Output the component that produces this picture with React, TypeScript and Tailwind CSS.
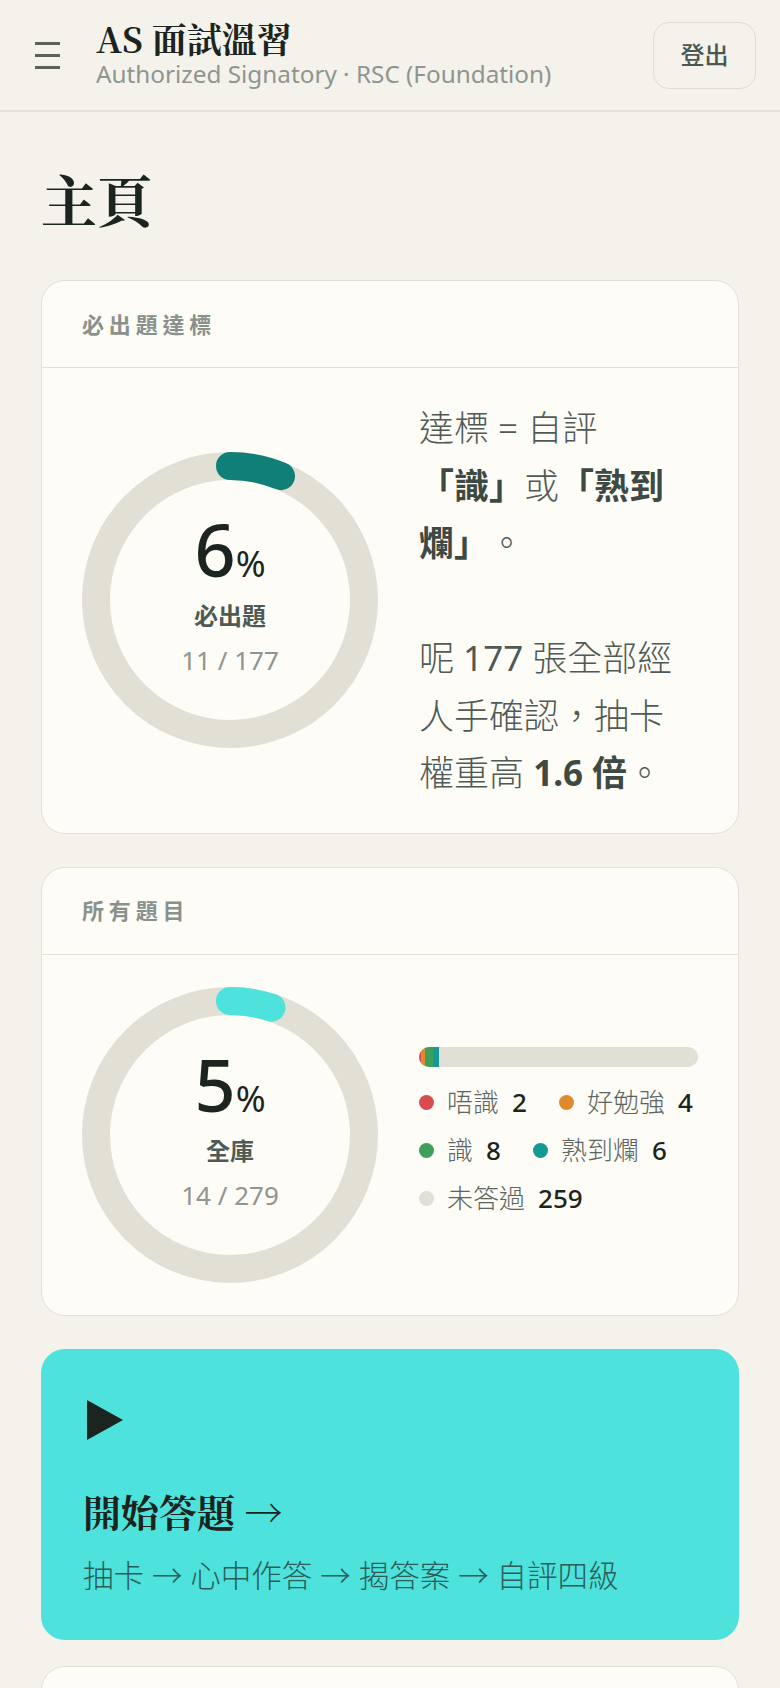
import React from "react";

const sans = "'Noto Sans', 'Noto Sans CJK TC', sans-serif";
const serif = "'Noto Serif CJK TC', 'Noto Serif CJK SC', 'Noto Serif', serif";
const cjk = "'Noto Sans CJK TC', sans-serif";

function Donut({
  frac,
  color,
  big,
  label,
  sub,
}: {
  frac: number;
  color: string;
  big: string;
  label: string;
  sub: string;
}) {
  const r = 134;
  const c = 2 * Math.PI * r;
  return (
    <div className="relative w-[296px] h-[296px] shrink-0">
      <svg width="296" height="296" viewBox="0 0 296 296">
        <circle cx="148" cy="148" r={r} fill="none" stroke="#e2dfd5" strokeWidth="28" />
        <circle
          cx="148"
          cy="148"
          r={r}
          fill="none"
          stroke={color}
          strokeWidth="28"
          strokeLinecap="round"
          strokeDasharray={`${c * frac} ${c}`}
          transform="rotate(-90 148 148)"
        />
      </svg>
      <div className="absolute inset-0 flex flex-col items-center justify-center pb-[10px]">
        <div className="flex items-baseline leading-none text-[#1c2420]">
          <span className="text-[72px] font-medium leading-[72px]">{big}</span>
          <span className="text-[36px]">%</span>
        </div>
        <div className="mt-[15px] text-[24px] leading-[32px] font-bold text-[#4f5a55]">{label}</div>
        <div className="mt-[11px] text-[26px] leading-[34px] text-[#8f958f]">{sub}</div>
      </div>
    </div>
  );
}

function Legend({ color, label, n }: { color: string; label: string; n: number }) {
  return (
    <div className="flex items-center h-[48px]">
      <span className="w-[15px] h-[15px] rounded-full mr-[13px]" style={{ backgroundColor: color }} />
      <span className="text-[26px] font-light text-[#5c6460]">{label}</span>
      <span className="ml-[13px] text-[26px] font-medium text-[#1c2420]">{n}</span>
    </div>
  );
}

function Card({ title, children, className = "" }: { title: string; children: React.ReactNode; className?: string }) {
  return (
    <section className={`rounded-[24px] border-[1.5px] border-[#e3e0d5] bg-[#fdfcf7] ${className}`}>
      <div className="h-[87px] px-10 flex items-center border-b-[1.5px] border-[#e3e0d5]">
        <h2 className="text-[22px] tracking-[0.22em] font-semibold text-[#8a918b]">{title}</h2>
      </div>
      {children}
    </section>
  );
}

export default function App() {
  return (
    <div className="min-h-screen bg-[#f4f2eb] text-[#1c2420] [text-spacing-trim:space-all]" style={{ fontFamily: sans }}>
      <header className="flex items-center h-[112px] border-b-2 border-[#e4e1d6] pl-[35px] pr-[24px]">
        <svg width="25" height="27" viewBox="0 0 25 27" className="shrink-0">
          <path d="M0 1.5H25M0 13.5H25M0 25.5H25" stroke="#5a625e" strokeWidth="3" />
        </svg>
        <div className="ml-[36px] flex flex-col">
          <div className="text-[35px] leading-[38px] font-bold text-[#1c2420]" style={{ fontFamily: serif }}>
            AS 面試溫習
          </div>
          <div className="text-[24.3px] leading-[34px] text-[#8f958f]">Authorized Signatory · RSC (Foundation)</div>
        </div>
        <button className="ml-auto w-[103px] h-[67px] rounded-2xl border-[1.5px] border-[#e0ddd0] text-[24px] font-medium text-[#4d5752]">
          登出
        </button>
      </header>

      <main className="px-[41px]">
        <h1 className="mt-[52px] mb-[48px] text-[56px] leading-[68px] font-bold text-[#1c2420]" style={{ fontFamily: serif }}>
          主頁
        </h1>

        <Card title="必出題達標">
          <div className="flex items-center px-10 py-[31px] gap-[41px]">
            <Donut frac={11 / 177} color="#0f7f77" big="6" label="必出題" sub="11 / 177" />
            <div className="w-[276px] text-[35px] leading-[57.5px] font-light text-[#505a55]">
              <p>
                達標 = 自評<b className="font-bold text-[#3f4944]">「識」</b>或<b className="font-bold text-[#3f4944]">「熟到爛」</b>。
              </p>
              <p className="mt-[57.5px]">
                呢 <span className="font-normal">177</span> 張全部經人手確認，抽卡權重高{" "}
                <b className="font-bold text-[#3f4944]">1.6 倍</b>。
              </p>
            </div>
          </div>
        </Card>

        <Card title="所有題目" className="mt-[33px]">
          <div className="flex items-center px-10 py-8 gap-[41px]">
            <Donut frac={14 / 279} color="#4de3dc" big="5" label="全庫" sub="14 / 279" />
            <div className="w-[280px]">
              <div className="flex h-[20px] w-full rounded-full overflow-hidden bg-[#e2dfd5]">
                <div className="h-full bg-[#d94a4f]" style={{ width: `${(2 / 279) * 100}%` }} />
                <div className="h-full bg-[#e08a2e]" style={{ width: `${(4 / 279) * 100}%` }} />
                <div className="h-full bg-[#3f9e5a]" style={{ width: `${(8 / 279) * 100}%` }} />
                <div className="h-full bg-[#149a94]" style={{ width: `${(6 / 279) * 100}%` }} />
              </div>
              <div className="mt-[12px] flex flex-wrap gap-x-8">
                <Legend color="#d94a4f" label="唔識" n={2} />
                <Legend color="#e08a2e" label="好勉強" n={4} />
                <Legend color="#3f9e5a" label="識" n={8} />
                <Legend color="#149a94" label="熟到爛" n={6} />
                <Legend color="#e2dfd5" label="未答過" n={259} />
              </div>
            </div>
          </div>
        </Card>

        <a className="mt-[33px] block h-[291px] rounded-[24px] bg-[#4de3dc] px-[42px] pt-[51px]">
          <svg width="36" height="40" viewBox="0 0 36 40" className="ml-[4px]">
            <path d="M0 0L36 20L0 40Z" fill="#1c2420" />
          </svg>
          <div className="mt-[46px] text-[38px] leading-[49px] font-bold text-[#1c2420]" style={{ fontFamily: serif }}>
            開始答題 <span className="font-normal">→</span>
          </div>
          <div className="mt-[17px] text-[30.5px] leading-[45px] font-light text-[#2b5d58]">
            抽卡 <span style={{ fontFamily: cjk }}>→</span> 心中作答 <span style={{ fontFamily: cjk }}>→</span> 揭答案{" "}
            <span style={{ fontFamily: cjk }}>→</span> 自評四級
          </div>
        </a>

        <section className="mt-[26px] h-[200px] rounded-[24px] border-[1.5px] border-[#e3e0d5] bg-[#fdfcf7]" />
      </main>
    </div>
  );
}
